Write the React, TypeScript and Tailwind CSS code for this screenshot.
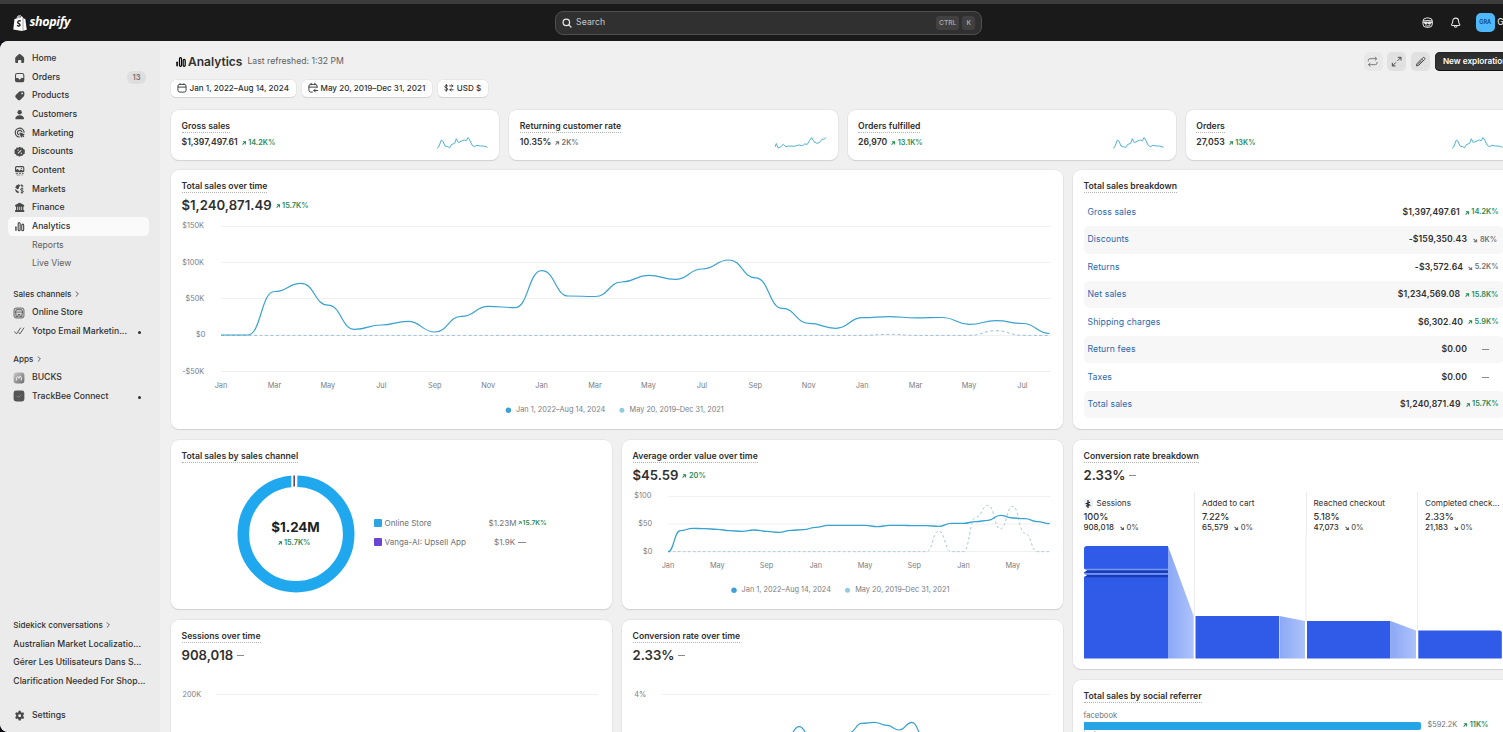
import React from "react";

type Pt = [number, number];

/* Curve with flat tangents at every data point */
function smooth(pts: Pt[]): string {
  return pts.reduce((d, [x, y], i) => {
    if (i === 0) return `M${x} ${y}`;
    const [px, py] = pts[i - 1];
    const m = (px + x) / 2;
    return `${d} C${m} ${py} ${m} ${y} ${x} ${y}`;
  }, "");
}
const series = (x0: number, step: number, ys: number[]): Pt[] =>
  ys.map((y, i) => [x0 + i * step, y]);

/* ---------- icons ---------- */
function Icon({ children, className = "size-[13.33px]" }: { children: React.ReactNode; className?: string }) {
  return (
    <svg viewBox="0 0 20 20" className={`shrink-0 ${className}`} fill="currentColor" aria-hidden="true">
      {children}
    </svg>
  );
}

const HomeIcon = () => (
  <Icon>
    <path d="M8.7 3.4a2 2 0 0 1 2.6 0l4.2 3.7c.8.7 1.2 1.7 1.2 2.700V14.600a1.900 1.900 0 0 1-1.900 1.900h-2.300v-3a1.500 1.500 0 0 0-1.500-1.500h-2a1.500 1.500 0 0 0-1.500 1.500v3H5.200a1.900 1.900 0 0 1-1.900-1.900V9.800c0-1 .4-2 1.200-2.700z" />
  </Icon>
);
const OrdersIcon = () => (
  <Icon>
    <path fillRule="evenodd" d="M6.300 3h7.400A3.300 3.300 0 0 1 17 6.300v7.400a3.300 3.300 0 0 1-3.300 3.300H6.300A3.300 3.300 0 0 1 3 13.700V6.300A3.300 3.300 0 0 1 6.300 3zM4.600 10.500h2.700c.5 0 .9.3 1.100.7l.4.900c.2.300.5.500.8.500h.8c.3 0 .6-.2.8-.5l.4-.9c.2-.4.6-.7 1.100-.7h2.700V6.300c0-1-.7-1.700-1.700-1.700H6.300c-1 0-1.700.7-1.700 1.700z" />
  </Icon>
);
const ProductsIcon = () => (
  <Icon>
    <path fillRule="evenodd" d="M11.600 3.200h3.300c1.200 0 2.100.9 2.100 2.100v3.600c0 .9-.4 1.800-1 2.400l-4.800 4.700a2.900 2.900 0 0 1-4 0l-3-3a2.900 2.900 0 0 1 0-4l4.900-4.800c.7-.7 1.600-1 2.500-1zM13.700 8a1.300 1.300 0 1 0 0-2.600 1.300 1.300 0 0 0 0 2.600z" />
  </Icon>
);
const CustomersIcon = () => (
  <Icon>
    <circle cx="10" cy="6.300" r="3.300" />
    <path d="M3.500 15.300c.6-2.700 3.300-4.300 6.500-4.300s5.900 1.600 6.500 4.300c.2 1-.6 1.700-1.500 1.700H5c-.9 0-1.700-.7-1.500-1.700z" />
  </Icon>
);
const MarketingIcon = () => (
  <Icon>
    <g fill="none" stroke="currentColor" strokeWidth="1.800" strokeLinecap="round">
      <path d="M9.500 16.500A6.600 6.600 0 1 1 16.600 9.500" />
      <path d="M8.800 13.200A3.500 3.500 0 1 1 13.400 8.800" />
    </g>
    <path d="M9.700 10.700c-.3-.7.300-1.300 1-1l6 2.200c.8.300.8 1.400 0 1.600l-1.400.5 1.700 1.700-1.300 1.300-1.700-1.700-.5 1.400c-.300.8-1.400.8-1.600 0z" />
  </Icon>
);
const DiscountsIcon = () => (
  <Icon>
    <path fillRule="evenodd" d="M10 2.500l2 1.500 2.500-.3 1 2.300 2.300 1-.3 2.500L18 10l-.5.5.3 2.500-2.300 1-1 2.300-2.500-.3-2 1.500-2-1.500-2.500.3-1-2.300-2.300-1 .3-2.500L2 10l.5-.5L2.200 7l2.300-1 1-2.300L8 4zM7.600 8.600a1 1 0 1 0 0-2 1 1 0 0 0 0 2zm4.800 4.800a1 1 0 1 0 0-2 1 1 0 0 0 0 2zM7 12l5-5 1 1-5 5z" />
  </Icon>
);
const ContentIcon = () => (
  <Icon>
    <path fillRule="evenodd" d="M5.500 3h9A2.500 2.500 0 0 1 17 5.500v4.700a2.300 2.300 0 0 1-2.300 2.300H5.300A2.300 2.300 0 0 1 3 10.200V5.500A2.500 2.500 0 0 1 5.500 3zM4.700 9l2-2 3 3 2-1.600 3.600 1.900V5.500c0-.500-.300-.8-.800-.8h-9c-.5 0-.8.300-.8.800zM12.700 7.500a1 1 0 1 0 0-2 1 1 0 0 0 0 2z" />
    <path d="M4 14h3.500v1H4zM9 14h3v1H9zM13.500 14H16v1h-2.500zM5 16h6v1H5zM12.500 16H15v1h-2.500z" />
  </Icon>
);
const MarketsIcon = () => (
  <Icon>
    <path d="M9 3.200a6.900 6.900 0 0 0-5.700 5l3.300 2.700 2.100-.8.3-2.600 2-1.800zM3 10.500a7 7 0 0 0 5.300 6.300l.5-2.300zM12 3.300l-.5 2.500 2 1.200 2.600-.6A7 7 0 0 0 12 3.300z" />
    <path d="M15.500 10.200c-.6-.7-2.800-1-3.700 0-1 1.200-.1 2.200 1.500 2.500 2 .4 2.800 1.200 1.900 2.400-.9 1-3 .900-3.800.100M13.500 8.200v9.400" fill="none" stroke="currentColor" strokeWidth="1.500" />
  </Icon>
);
const FinanceIcon = () => (
  <Icon>
    <path d="M9 3.100a2 2 0 0 1 2 0l5 2.700c.7.400 1 .9 1 1.500 0 .7-.5 1.200-1.200 1.200H4.200C3.500 8.500 3 8 3 7.300c0-.6.300-1.100 1-1.500zM4.500 8.500h2V14h-2zM7.700 8.500h1.800V14H7.700zM10.700 8.500h1.800V14h-1.800zM13.600 8.500h2V14h-2z" />
    <rect x="3" y="13.500" width="14" height="3" rx="1.300" />
  </Icon>
);
const AnalyticsIcon = ({ className }: { className?: string }) => (
  <Icon className={className}>
    <path d="M3.300 10.500a1.100 1.100 0 0 1 2.200 0v5a1.100 1.100 0 0 1-2.200 0z" />
    <path fill="none" stroke="currentColor" strokeWidth="1.700" d="M7.800 5.300a1.400 1.400 0 0 1 2.900 0v9.400a1.400 1.400 0 0 1-2.900 0zM13.100 7.700a1.400 1.400 0 0 1 2.900 0v7a1.400 1.400 0 0 1-2.900 0z" />
  </Icon>
);
const SettingsIcon = () => (
  <Icon>
    <path fillRule="evenodd" d="M8.500 2.800h3l.5 2 1.300.8 2-.6 1.500 2.600-1.500 1.500v1.700l1.500 1.500-1.500 2.700-2-.6-1.300.8-.5 2h-3l-.5-2-1.300-.8-2 .6-1.500-2.700 1.500-1.500V9.100L3.200 7.600 4.700 5l2 .6L8 4.800zM10 12.200a2.200 2.200 0 1 0 0-4.400 2.200 2.200 0 0 0 0 4.400z" />
  </Icon>
);
const StoreIcon = () => (
  <Icon className="size-[12px]">
    <rect x="1.700" y="1.700" width="16.600" height="16.600" rx="3.500" fill="#cfcfcf" stroke="#666" strokeWidth="1.600" />
    <path d="M5.500 4.500h9l1.500 4v1.500l-1 .5V16h-3.500v-3.500h-3V16H5v-5.500L4 10V8.500z" fill="#d8d8d8" stroke="#555" strokeWidth="1.500" />
    <path d="M4.500 8.500h11" stroke="#555" strokeWidth="1.300" />
  </Icon>
);
const YotpoIcon = () => (
  <Icon className="size-[12px]">
    <g fill="none" stroke="#4a4a4a" strokeWidth="1.500" strokeLinecap="round">
      <path d="M2.500 11.500l3.500 3L12.500 5M9.500 13l2 1.800L18 5" />
    </g>
  </Icon>
);
const BucksIcon = () => (
  <Icon className="size-[12px]">
    <defs>
      <linearGradient id="bucks" x1="0" y1="0" x2="1" y2="1">
        <stop offset="0" stopColor="#c9c9c9" />
        <stop offset="1" stopColor="#6c6c6c" />
      </linearGradient>
    </defs>
    <rect x="1" y="1" width="18" height="18" rx="4" fill="url(#bucks)" />
    <path d="M6 14V9.500l2-2 2 3 2-4 2 3V14" fill="none" stroke="#efefef" strokeWidth="1.600" />
  </Icon>
);
const TrackIcon = () => (
  <Icon className="size-[12px]">
    <rect x="1" y="1" width="18" height="18" rx="4" fill="#555" />
    <path d="M6.500 9.500l3 3 4-4.500" fill="none" stroke="#8d8d8d" strokeWidth="1.300" />
  </Icon>
);
const Chevron = () => (
  <svg viewBox="0 0 6 8" className="h-[6px] w-[4.500px]" fill="none" stroke="#5a5a5a" strokeWidth="1.300" strokeLinecap="round" strokeLinejoin="round">
    <path d="M1.500 1l3 3-3 3" />
  </svg>
);
const CalendarIcon = () => (
  <Icon className="size-[12px]">
    <g fill="none" stroke="currentColor" strokeWidth="1.500">
      <rect x="3.200" y="4" width="13.600" height="12.800" rx="3" />
      <path d="M3.200 8.500h13.600M6.800 2.200v2.500M13.200 2.200v2.500" />
    </g>
  </Icon>
);
const CompareIcon = () => (
  <Icon className="size-[12px]">
    <g fill="none" stroke="currentColor" strokeWidth="1.500" strokeLinecap="round">
      <path d="M16.800 9V7a3 3 0 0 0-3-3H6.200a3 3 0 0 0-3 3v6.800a3 3 0 0 0 3 3H9M3.200 8.500h13.600M6.800 2.200v2.500M13.200 2.200v2.500M11.500 14.200H18M14 11.700l-2.500 2.500 2.500 2.500" />
    </g>
  </Icon>
);
const CurrencyIcon = () => (
  <Icon className="size-[12px]">
    <g fill="none" stroke="currentColor" strokeWidth="1.500" strokeLinecap="round">
      <path d="M8 6.800C7.200 5.500 3.200 5.300 3 7.600c-.2 2.500 5 1.700 5 4.400 0 2.400-4.300 2.500-5.200.8M5.500 4v11.500M11 6.500h5.500M14.500 4.500l2 2-2 2M17 13h-5.500M13.500 11l-2 2 2 2" />
    </g>
  </Icon>
);

function Arrow({ down = false, className = "size-[4.500px]" }: { down?: boolean; className?: string }) {
  return (
    <svg viewBox="0 0 8 8" className={`shrink-0 ${className}`} fill="none" stroke="currentColor" strokeWidth="1.800">
      {down ? <path d="M1 1.500l4.500 4.500M1.500 6.500h5V2" /> : <path d="M1 6.500l4.500-4.500M1.500 1.500h5V6" />}
    </svg>
  );
}

function Delta({ value, tone = "up", className = "" }: { value: string; tone?: "up" | "gray" | "down"; className?: string }) {
  const color = tone === "up" ? "text-[#2a8a55]" : "text-[#707070]";
  return (
    <span className={`flex items-center gap-[2px] text-[7.330px] font-semibold ${color} ${className}`}>
      <Arrow down={tone === "down"} />
      {value}
    </span>
  );
}

/* ---------- building blocks ---------- */
function Card({ title, children, className = "" }: { title: string; children?: React.ReactNode; className?: string }) {
  return (
    <section className={`flex flex-col overflow-hidden rounded-[8px] bg-white px-[10.500px] pt-[10px] shadow-[0_0_0_0.500px_#dcdcdc,0_1px_1px_#c9c9c9] ${className}`}>
      <h2 className="self-start border-b border-dotted border-[#b4b4b4] text-[8.670px] leading-[12px] font-semibold text-[#303030]">
        {title}
      </h2>
      {children}
    </section>
  );
}
function Headline({ value, children }: { value: string; children?: React.ReactNode }) {
  return (
    <div className="mt-[3px] flex h-[19px] items-center gap-[4px]">
      <span className="text-[13.150px] font-semibold text-[#303030]">{value}</span>
      {children}
    </div>
  );
}
const Dash = () => <span className="h-px w-[7px] bg-[#8a8a8a]" />;

const salesSpark = "0,11.300 1.700,10 4.300,3 6,4.300 8,9 10.700,9.700 12.700,10.700 14.300,7.700 17.700,6.300 19.300,1.700 21.300,5.700 24,4.300 27.300,3 29.300,3.700 31,0.500 32.700,3 35,8 37.300,9.700 40,8.300 43.300,9 46.700,9 50.500,10.300";
const returningSpark = "0,10 1.300,6.500 3,11 5.700,9.700 8.300,7.300 10.700,9.700 14,9 19,9.300 24,8 27.300,8.700 29.700,7 32.300,7.300 34.300,4 36.700,0.600 39,4.700 41.700,6.300 44.300,5.700 47.300,2 49,2.300 51.300,0.300";

function Metric({ title, value, delta, gray = false, points }: { title: string; value: string; delta: string; gray?: boolean; points: string }) {
  return (
    <Card title={title} className="h-[50px]">
      <div className="flex justify-between">
        <div className="mt-[3px] flex h-[12px] items-center gap-[4px]">
          <span className="text-[8.670px] font-semibold text-[#303030]">{value}</span>
          <Delta value={delta} tone={gray ? "gray" : "up"} className="pt-[2px]" />
        </div>
        <svg viewBox="0 0 52 12" className="mt-[4px] h-[12px] w-[52px]">
          <polyline points={points} fill="none" stroke="#3ba9cf" strokeWidth="0.900" strokeLinejoin="round" />
        </svg>
      </div>
    </Card>
  );
}

function Grid({ x1, x2, ys }: { x1: number; x2: number; ys: number[] }) {
  return (
    <>
      {ys.map((y) => (
        <line key={y} x1={x1} x2={x2} y1={y} y2={y} stroke="#f0f0f0" strokeWidth="1" />
      ))}
    </>
  );
}
function Legend({ x, y }: { x: number; y: number }) {
  return (
    <g className="fill-[#7a7d82] text-[7.330px]">
      <circle cx={x} cy={y + 0.700} r="2.700" fill="#3ea0d4" />
      <text x={x + 7.600} y={y + 2.500}>Jan 1, 2022–Aug 14, 2024</text>
      <circle cx={x + 113.500} cy={y + 0.700} r="2.500" fill="#92cbdd" />
      <text x={x + 121.200} y={y + 2.500}>May 20, 2019–Dec 31, 2021</text>
    </g>
  );
}

const salesYs = [335, 335, 291.500, 283.300, 305.200, 329.300, 325, 321.300, 332, 316.400, 306.400, 307.600, 270.600, 296, 296.500, 282, 275.300, 279.400, 269, 260, 277.800, 308.400, 323.400, 328.300, 317.700, 316.600, 317.900, 317.500, 324.400, 320.600, 323.500, 333.500];
const salesPrevYs = salesYs.map((_, i) => (i === 25 ? 334.300 : i === 29 ? 330.700 : 335.400));
const aov = [365, 302, 295, 296, 298, 302, 304, 300, 304, 307, 301, 299, 292, 286, 286, 286, 286, 290, 286, 286, 287, 287, 289, 280, 280, 275, 271, 256, 264, 266, 275, 281].map((v) => 430 + v / 3);
const aovPrev = Array.from({ length: 32 }, (_, i) => {
  const peaks: Record<number, number> = { 22: 303, 25: 262, 26: 226, 27: 297, 28: 229, 29: 310 };
  return 430 + (peaks[i] ?? 365) / 3;
});

function SalesOverTime() {
  const months = ["Jan", "Mar", "May", "Jul", "Sep", "Nov", "Jan", "Mar", "May", "Jul", "Sep", "Nov", "Jan", "Mar", "May", "Jul"];
  return (
    <Card title="Total sales over time" className="col-span-2 h-[259px]">
      <Headline value="$1,240,871.49">
        <Delta value="15.7K%" className="pt-px" />
      </Headline>
      <svg viewBox="182 215 871 205" className="h-[205px] w-[871px] shrink-0 font-[Inter]">
        <Grid x1={221} x2={1051} ys={[226.500, 262.500, 298.500, 335.500, 371.500]} />
        <g className="fill-[#7a7d82] text-[7.330px]" textAnchor="end">
          <text x="204" y="228.300">$150K</text>
          <text x="204" y="265">$100K</text>
          <text x="204.300" y="301">$50K</text>
          <text x="205.300" y="337.300">$0</text>
          <text x="204.300" y="374">-$50K</text>
        </g>
        <g className="fill-[#7a7d82] text-[7.330px]" textAnchor="middle">
          {months.map((m, i) => (
            <text key={i} x={221 + i * 53.430} y="388">{m}</text>
          ))}
        </g>
        <path d={smooth(series(221, 26.730, salesPrevYs))} fill="none" stroke="#9cc0d6" strokeWidth="1" strokeDasharray="3 2.500" />
        <path d={smooth(series(221, 26.730, salesYs))} fill="none" stroke="#3aa2cf" strokeWidth="1.200" />
        <Legend x={508.400} y={409.500} />
      </svg>
    </Card>
  );
}

const breakdown: { label: string; value: string; delta?: string; tone?: "up" | "down" }[] = [
  { label: "Gross sales", value: "$1,397,497.61", delta: "14.2K%", tone: "up" },
  { label: "Discounts", value: "-$159,350.43", delta: "8K%", tone: "down" },
  { label: "Returns", value: "-$3,572.64", delta: "5.2K%", tone: "down" },
  { label: "Net sales", value: "$1,234,569.08", delta: "15.8K%", tone: "up" },
  { label: "Shipping charges", value: "$6,302.40", delta: "5.9K%", tone: "up" },
  { label: "Return fees", value: "$0.00" },
  { label: "Taxes", value: "$0.00" },
  { label: "Total sales", value: "$1,240,871.49", delta: "15.7K%", tone: "up" },
];

function SalesBreakdown() {
  return (
    <Card title="Total sales breakdown" className="h-[259px]">
      <div className="mt-[5.700px] flex flex-col">
        {breakdown.map((r) => (
          <div key={r.label} className="flex h-[27.450px] items-center rounded-[5px] pr-[5px] pl-[4px] text-[8.670px] even:bg-[#f7f7f7]">
            <span className="flex-1 tracking-[0.100px] text-[#2a68b0]">{r.label}</span>
            <span className="mr-[5px] font-semibold tracking-[0.100px] text-[#303030]">{r.value}</span>
            <span className="flex min-w-[26.500px] justify-center">
              {r.delta ? <Delta value={r.delta} tone={r.tone} className="pt-px" /> : <Dash />}
            </span>
          </div>
        ))}
      </div>
    </Card>
  );
}

function SalesByChannel() {
  return (
    <Card title="Total sales by sales channel" className="h-[169px]">
      <div className="flex items-center pt-[10.500px] pl-[54px]">
        <div className="grid size-[120px] shrink-0 place-items-center">
          <svg viewBox="0 0 120 120" className="col-start-1 row-start-1 size-[120px]">
            <circle cx="60" cy="60" r="52.700" fill="none" stroke="#1fa8ee" strokeWidth="11.600" />
            <rect x="55.300" y="0" width="6" height="14" fill="#fff" />
            <rect x="57.400" y="1.500" width="1.600" height="11" fill="#5b4a78" />
          </svg>
          <div className="col-start-1 row-start-1 flex flex-col items-center pt-[2px]">
            <span className="text-[13.330px] leading-[17px] font-bold text-[#202223]">$1.24M</span>
            <Delta value="15.7K%" className="h-[14px] pr-[3px]" />
          </div>
        </div>
        <div className="-mt-[3px] ml-[18.500px] grid grid-cols-[10.500px_96px_1fr] items-center text-[8.100px] leading-[18.300px] text-[#6f7276]">
          <span className="size-[8px] rounded-[1px] bg-[#2ba5e4]" />
          <span>Online Store</span>
          <span className="flex items-center gap-[1px] pl-[8px]">
            $1.23M
            <span className="flex items-center pt-px text-[6.700px] font-semibold text-[#2a8a55]">
              <Arrow className="size-[4px]" />
              <span className="pl-px">15.7K%</span>
            </span>
          </span>
          <span className="size-[8px] rounded-[1px] bg-[#6a45d4]" />
          <span>Vanga-AI: Upsell App</span>
          <span className="flex items-center gap-[3px] pl-[13.500px]">
            $1.9K
            <span className="mt-[2px] h-px w-[8px] bg-[#8a8a8a]" />
          </span>
        </div>
      </div>
    </Card>
  );
}

function AverageOrderValue() {
  const months = ["Jan", "May", "Sep", "Jan", "May", "Sep", "Jan", "May"];
  return (
    <Card title="Average order value over time" className="h-[169px]">
      <Headline value="$45.59">
        <Delta value="20%" className="pt-px" />
      </Headline>
      <svg viewBox="633 485 420 118" className="h-[118px] w-[420px] shrink-0 font-[Inter]">
        <Grid x1={668} x2={1050} ys={[496.500, 524, 551.500]} />
        <g className="fill-[#7a7d82] text-[7.330px]" textAnchor="end">
          <text x="651.300" y="498.300">$100</text>
          <text x="652" y="526.300">$50</text>
          <text x="652.300" y="554.300">$0</text>
        </g>
        <g className="fill-[#7a7d82] text-[7.330px]" textAnchor="middle">
          {months.map((m, i) => (
            <text key={i} x={668 + i * 49.250} y="568.300">{m}</text>
          ))}
        </g>
        <path d={smooth(series(668, 12.310, aovPrev))} fill="none" stroke="#a3c9dc" strokeWidth="1" strokeDasharray="2.500 2.500" />
        <path d={smooth(series(668, 12.310, aov))} fill="none" stroke="#3aa2cf" strokeWidth="1.300" />
        <Legend x={734} y={589.500} />
      </svg>
    </Card>
  );
}

const funnel = [
  { label: "Sessions", pct: "100%", count: "908,018" },
  { label: "Added to cart", pct: "7.22%", count: "65,579" },
  { label: "Reached checkout", pct: "5.18%", count: "47,073" },
  { label: "Completed check...", pct: "2.33%", count: "21,183" },
];

function ConversionBreakdown() {
  return (
    <Card title="Conversion rate breakdown" className="h-[229px]">
      <Headline value="2.33%">
        <Dash />
      </Headline>
      <div className="mt-[7px] grid h-[42px] w-[446px] shrink-0 grid-cols-[110.500px_111.500px_111.500px_112px] text-[#303030]">
        {funnel.map((f, i) => (
          <div key={f.label} className={i ? "border-l border-[#ececec] pt-[5px] pl-[7px]" : "pt-[5px]"}>
            <div className="flex h-[13px] items-center gap-[4px] text-[8.130px] whitespace-nowrap">
              {i === 0 && (
                <span className="flex size-[9px] items-center justify-center rounded-[2px] bg-[#eef0f5]">
                  <svg viewBox="0 0 8 8" className="size-[8px]" fill="none" stroke="#222" strokeWidth="1.200">
                    <path d="M4 0v8M6 2.200L2.500 3.500 5.500 5 2 6" />
                  </svg>
                </span>
              )}
              {f.label}
            </div>
            <div className="h-[12.500px] text-[9.200px] leading-[14px] font-medium">{f.pct}</div>
            <div className="flex h-[11px] items-center gap-[6px] text-[7.900px] font-medium">
              {f.count}
              <span className="flex items-center gap-[2px] text-[7.500px] text-[#555]">
                <Arrow down />
                0%
              </span>
            </div>
          </div>
        ))}
      </div>
      <svg viewBox="1084 534 431 126" className="h-[126px] w-[431px] shrink-0">
        <defs>
          <linearGradient id="drop" x1="0" x2="1" y1="0" y2="0">
            <stop offset="0" stopColor="#8ca8f5" />
            <stop offset="1" stopColor="#adc3fc" />
          </linearGradient>
        </defs>
        <path d="M1194.500 534v82M1306 534v87M1417.500 534v97" stroke="#ececec" strokeWidth="1" />
        <path d="M1168 546l25.700 70v42.500H1168z" fill="url(#drop)" />
        <path d="M1279.500 616l25.500 5v37.500h-25.500z" fill="url(#drop)" />
        <path d="M1390.500 621l25.500 9.500v28h-25.500z" fill="url(#drop)" />
        <path d="M1084 549a3 3 0 0 1 3-3h81v112.500h-84z" fill="#2f5be8" />
        <path d="M1084 568.800h84v1.700h-84zM1084 573h84v1.700h-84z" fill="#7594f2" />
        <path d="M1085.500 570.500h82.500v2.500h-82.500zM1085.500 575h82.500v2.300h-82.500z" fill="#173cb5" />
        <path d="M1083.500 568.500l3.500 2-3.500 2zM1083.500 573.500l3.500 2-3.500 1.500z" fill="#fff" />
        <path d="M1195.500 616h83.500v42.500h-83.500zM1307 621h83.300v37.500H1307zM1418.300 630.500h81a2.500 2.500 0 0 1 2.500 2.500v25.500h-83.500z" fill="#2f5be8" />
      </svg>
    </Card>
  );
}

function SessionsOverTime() {
  return (
    <Card title="Sessions over time" className="h-[169px]">
      <Headline value="908,018">
        <Dash />
      </Headline>
      <svg viewBox="182 665 420 70" className="h-[70px] w-[420px] shrink-0 font-[Inter]">
        <Grid x1={216} x2={598} ys={[694.500]} />
        <text x="182.500" y="697" className="fill-[#7a7d82] text-[7.330px]">200K</text>
      </svg>
    </Card>
  );
}

function ConversionOverTime() {
  const ys = [940, 940, 940, 940, 940, 940, 940, 940, 940, 940, 925, 890, 925, 940, 940, 908, 880, 877, 886, 900, 877, 924, 940].map((v) => 430 + v / 3);
  return (
    <Card title="Conversion rate over time" className="h-[169px]">
      <Headline value="2.33%">
        <Dash />
      </Headline>
      <svg viewBox="633 665 420 70" className="h-[70px] w-[420px] shrink-0 font-[Inter]">
        <Grid x1={661} x2={1050} ys={[694.500]} />
        <text x="634.300" y="697" className="fill-[#7a7d82] text-[7.330px]">4%</text>
        <path d={smooth(series(661.300, 12.530, ys))} fill="none" stroke="#3aa2cf" strokeWidth="1.200" />
      </svg>
    </Card>
  );
}

function SocialReferrer() {
  return (
    <Card title="Total sales by social referrer" className="h-[169px]">
      <div className="mt-[7px] text-[7.600px] leading-[12px] text-[#6f7276]">facebook</div>
      <div className="mt-[-0.500px] flex h-[8px] shrink-0 items-center">
        <span className="h-[8px] w-[337px] rounded-r-[2px] bg-[#25a5e6]" />
        <span className="ml-[7px] text-[7.330px] text-[#6f7276]">$592.2K</span>
        <Delta value="11K%" className="ml-[6px]" />
      </div>
      <div className="text-[7.600px] leading-[9px] text-[#6f7276]">instagram</div>
    </Card>
  );
}

/* ---------- shell ---------- */
function NavItem({ icon, label, active = false, badge, dot = false }: { icon: React.ReactNode; label: string; active?: boolean; badge?: string; dot?: boolean }) {
  return (
    <a className={`mr-[11px] ml-[8px] flex h-[18.670px] items-center rounded-[5px] pl-[5px] ${active ? "bg-[#fafafa]" : ""}`}>
      <span className="flex w-[19px] items-center text-[#4a4a4a]">{icon}</span>
      <span className="flex-1 whitespace-nowrap">{label}</span>
      {badge && <span className="mr-[3px] rounded-[6px] bg-[#dedede] px-[5.500px] text-[7.700px] leading-[13px] text-[#616161]">{badge}</span>}
      {dot && <span className="mt-[2px] mr-[8px] size-[3px] rounded-full bg-[#303030]" />}
    </a>
  );
}
function NavHeading({ children, className = "" }: { children: string; className?: string }) {
  return (
    <div className={`flex h-[18.670px] items-center gap-[3.500px] pl-[13.300px] text-[8.100px] ${className}`}>
      {children}
      <Chevron />
    </div>
  );
}

function Sidebar() {
  return (
    <nav className="flex w-[160px] shrink-0 flex-col rounded-tl-[8px] rounded-bl-[8px] bg-[#ebebeb] pt-[8.200px] text-[8.670px] font-medium text-[#303030]">
      <NavItem icon={<HomeIcon />} label="Home" />
      <NavItem icon={<OrdersIcon />} label="Orders" badge="13" />
      <NavItem icon={<ProductsIcon />} label="Products" />
      <NavItem icon={<CustomersIcon />} label="Customers" />
      <NavItem icon={<MarketingIcon />} label="Marketing" />
      <NavItem icon={<DiscountsIcon />} label="Discounts" />
      <NavItem icon={<ContentIcon />} label="Content" />
      <NavItem icon={<MarketsIcon />} label="Markets" />
      <NavItem icon={<FinanceIcon />} label="Finance" />
      <NavItem icon={<AnalyticsIcon />} label="Analytics" active />
      <div className="pl-[32px] leading-[18.400px] font-normal text-[#616161]">Reports</div>
      <div className="pl-[32px] leading-[18.670px] font-normal text-[#616161]">Live View</div>
      <NavHeading className="mt-[12px]">Sales channels</NavHeading>
      <NavItem icon={<StoreIcon />} label="Online Store" />
      <NavItem icon={<YotpoIcon />} label="Yotpo Email Marketin..." dot />
      <NavHeading className="mt-[9px]">Apps</NavHeading>
      <NavItem icon={<BucksIcon />} label="BUCKS" />
      <NavItem icon={<TrackIcon />} label="TrackBee Connect" dot />
      <div className="flex-1" />
      <NavHeading>Sidekick conversations</NavHeading>
      <div className="pl-[13.300px] leading-[18.500px] whitespace-nowrap">
        <div>Australian Market Localizatio...</div>
        <div>Gérer Les Utilisateurs Dans S...</div>
        <div>Clarification Needed For Shop...</div>
      </div>
      <div className="mt-[16px] mb-[7.300px]">
        <NavItem icon={<SettingsIcon />} label="Settings" />
      </div>
    </nav>
  );
}

function TopBar() {
  return (
    <header className="flex h-[41px] shrink-0 items-center border-t-4 border-[#3d3d3d] bg-[#1a1a1a]">
      <div className="flex w-[555px] items-center pl-[13px]">
        <svg viewBox="0 0 28 32" className="h-[16px] w-[14px]">
          <path d="M3 8l4-1.200C8 3 10.500.5 13.500.6c1.500 0 2.300.9 2.800 2l1-.2c1.200.3 2 1.500 2.400 2.700l2.300 2.300 2.500.3 3 22-9.500 2.200L.5 29z" fill="#fff" />
          <path d="M20 6v25.500" stroke="#1a1a1a" strokeWidth=".8" />
          <path d="M8.500 7C9.500 4 11.500 2 13.500 2.200c1.200.2 1.600 2 1.600 3.500M11.700 6.200C12.500 4 14 3 16 3" fill="none" stroke="#1a1a1a" strokeWidth="1" />
          <path d="M15.500 12.300c-2.500-1.500-6-.5-6 2.200 0 3.200 4.500 2.700 4.500 5.500 0 2.500-3.500 2.500-6 .7" fill="none" stroke="#1a1a1a" strokeWidth="2.800" />
        </svg>
        <span className="ml-[2.500px] pb-[2px] font-['Open_Sans'] text-[12.600px] leading-[16px] font-bold tracking-[-0.400px] text-white italic">shopify</span>
      </div>
      <div className="flex h-[24px] w-[427px] items-center rounded-[8px] border border-[#4f4f4f] bg-[#303030] pr-[6px] pl-[6px] text-[8.670px] text-[#c8c8c8]">
        <svg viewBox="0 0 12 12" className="mt-px mr-[4px] size-[10px]" fill="none" stroke="#e8e8e8" strokeWidth="1.500" strokeLinecap="round">
          <circle cx="5.200" cy="5.200" r="3.900" />
          <path d="M8.200 8.200l2.600 2.600" />
        </svg>
        <span className="flex-1 pb-px tracking-[0.100px]">Search</span>
        <span className="rounded-[3px] bg-[#414141] px-[3px] text-[6.700px] leading-[14px] font-medium text-[#adadad]">CTRL</span>
        <span className="ml-[3px] rounded-[3px] bg-[#414141] px-[4px] text-[6.700px] leading-[14px] font-medium text-[#adadad]">K</span>
      </div>
      <div className="flex flex-1 items-center overflow-hidden pl-[438.500px] text-[#e3e3e3]">
        <svg viewBox="0 0 20 20" className="size-[13.330px] shrink-0" fill="none" stroke="currentColor" strokeWidth="1.500">
          <rect x="2.800" y="3" width="14.400" height="14" rx="5.500" />
          <path d="M3 7.800c4-1 10-1 14 0M3.500 10h13" strokeWidth="1.800" />
          <path d="M6 9.500h3v2.500H6zM11.300 9.500h3v2.500h-3z" fill="currentColor" />
          <path d="M6.500 14.500c2.500 1 5.500.8 7.500-.7" />
        </svg>
        <svg viewBox="0 0 20 20" className="ml-[15.500px] size-[13.330px] shrink-0" fill="none" stroke="currentColor" strokeWidth="1.600" strokeLinejoin="round">
          <path d="M10 3.200c-2.600 0-4.300 1.900-4.300 4.300 0 2.800-.7 3.500-1.700 4.900-.6.900 0 1.800 1 1.800h10c1 0 1.600-.9 1-1.800-1-1.400-1.700-2.100-1.700-4.900 0-2.400-1.700-4.300-4.300-4.300zM8 14.500c0 1.300.8 2.300 2 2.300s2-1 2-2.300" />
        </svg>
        <span className="ml-[13px] flex size-[19px] shrink-0 items-center justify-center rounded-[5px] bg-[#4fb8fb] text-[5.500px] font-semibold text-[#0b4468]">GRA</span>
        <span className="ml-[2.500px] text-[8.670px] font-medium">G</span>
      </div>
    </header>
  );
}

const chipClass = "flex h-[16.500px] items-center gap-[2px] rounded-[5px] bg-white pr-[7px] pl-[4.500px] text-[8.100px] font-medium text-[#303030] shadow-[0_0_0_0.500px_#dedede,0_1px_0_#c6c6c6]";

function PageHeader() {
  return (
    <>
      <div className="flex h-[19px] items-center">
        <AnalyticsIcon className="ml-[3px] size-[14px]" />
        <h1 className="text-[12px] font-semibold text-[#303030]">Analytics</h1>
        <span className="ml-[5px] text-[8.670px] text-[#616161]">Last refreshed: 1:32 PM</span>
        <div className="flex-1" />
        <div className="mr-[10px] flex w-[140.500px] gap-[4.800px] text-[#4a4a4a]">
          <span className="flex size-[19px] shrink-0 items-center justify-center rounded-[5px] bg-[#e8e8e8] text-[#7a7a7a]">
            <svg viewBox="0 0 20 20" className="size-[13.330px]" fill="none" stroke="currentColor" strokeWidth="1.500" strokeLinecap="round" strokeLinejoin="round">
              <path d="M3.500 9V8a2.500 2.500 0 0 1 2.500-2.500h10M13.800 3.200l2.400 2.300-2.400 2.300M16.500 11v1a2.500 2.500 0 0 1-2.500 2.500H4M6.200 16.800l-2.400-2.300 2.400-2.300" />
            </svg>
          </span>
          <span className="flex size-[19px] shrink-0 items-center justify-center rounded-[5px] bg-[#e1e1e1]">
            <svg viewBox="0 0 20 20" className="size-[13.330px]" fill="none" stroke="currentColor" strokeWidth="1.500" strokeLinecap="round" strokeLinejoin="round">
              <path d="M11.500 8.500l4.800-4.800M12.300 3.500h4.200v4.200M8.500 11.500l-4.800 4.800M3.500 12.300v4.200h4.200" />
            </svg>
          </span>
          <span className="flex size-[19px] shrink-0 items-center justify-center rounded-[5px] bg-[#e1e1e1]">
            <svg viewBox="0 0 20 20" className="size-[13.330px]" fill="none" stroke="currentColor" strokeWidth="1.500" strokeLinejoin="round">
              <path d="M13.200 4.200a1.800 1.800 0 0 1 2.600 2.600l-8.600 8.600-3.500.9.900-3.500zM11.500 6l2.600 2.600M5.500 14.500l6-6" />
            </svg>
          </span>
          <button className="h-[19px] shrink-0 rounded-[5px] bg-linear-to-b from-[#2b2b2b] to-[#3a3a3a] px-[8px] text-[8.200px] font-semibold whitespace-nowrap text-white shadow-[inset_0_-1px_0_#111,inset_0_0_0_0.500px_#1a1a1a]">
            New exploration
          </button>
        </div>
      </div>
      <div className="mt-[9px] mb-[13.500px] flex gap-[6px]">
        <span className={chipClass}><CalendarIcon />Jan 1, 2022–Aug 14, 2024</span>
        <span className={chipClass}><CompareIcon />May 20, 2019–Dec 31, 2021</span>
        <span className={chipClass}><CurrencyIcon />USD $</span>
      </div>
    </>
  );
}

export default function App() {
  return (
    <div className="flex h-[732px] w-[1503px] flex-col overflow-hidden bg-[#0c0c12] font-[Inter,sans-serif]">
      <TopBar />
      <div className="flex min-h-0 flex-1 overflow-hidden rounded-l-[8px] bg-[#f0f0f0]">
        <Sidebar />
        <main className="w-[1354px] shrink-0 pt-[11px] pl-[11px]">
          <PageHeader />
          <div className="grid grid-cols-4 gap-[10px]">
            <Metric title="Gross sales" value="$1,397,497.61" delta="14.2K%" points={salesSpark} />
            <Metric title="Returning customer rate" value="10.35%" delta="2K%" gray points={returningSpark} />
            <Metric title="Orders fulfilled" value="26,970" delta="13.1K%" points={salesSpark} />
            <Metric title="Orders" value="27,053" delta="13K%" points={salesSpark} />
          </div>
          <div className="mt-[10px] grid grid-cols-3 items-start gap-x-[10px] gap-y-[11px]">
            <SalesOverTime />
            <SalesBreakdown />
            <div className="col-span-2 grid grid-cols-2 gap-x-[10px] gap-y-[11px]">
              <SalesByChannel />
              <AverageOrderValue />
              <SessionsOverTime />
              <ConversionOverTime />
            </div>
            <div className="flex flex-col gap-[11px]">
              <ConversionBreakdown />
              <SocialReferrer />
            </div>
          </div>
        </main>
      </div>
    </div>
  );
}
